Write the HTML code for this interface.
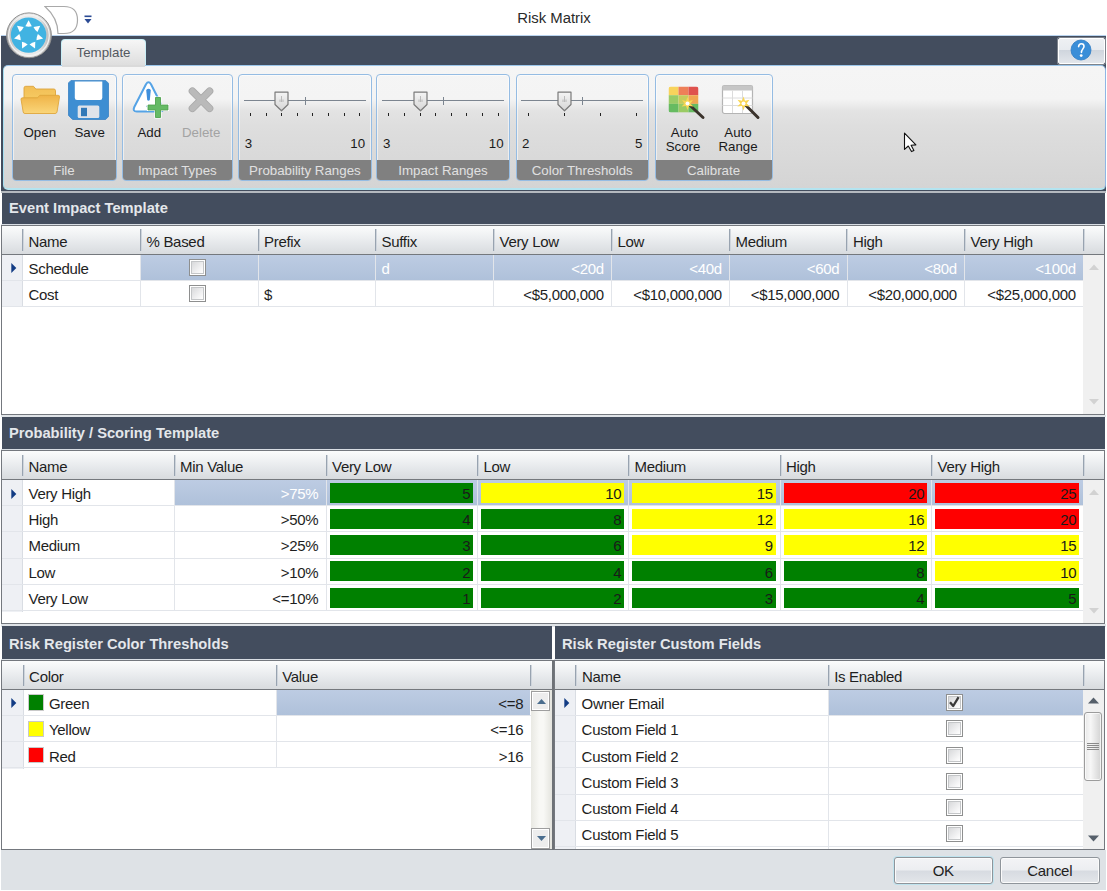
<!DOCTYPE html><html><head><meta charset="utf-8"><style>
html,body{margin:0;padding:0;}
body{width:1107px;height:891px;position:relative;overflow:hidden;background:#fff;font-family:"Liberation Sans", sans-serif;}
div{box-sizing:border-box;}
</style></head><body>
<div style="position:absolute;left:404px;width:300px;top:11.09px;font-size:14.9px;line-height:1;color:#2a2a2a;font-weight:400;white-space:nowrap;text-align:center">Risk Matrix</div>
<div style="position:absolute;left:1px;top:35px;width:1105px;height:1px;background:#b9d3ee"></div>
<div style="position:absolute;left:1px;top:36px;width:1105px;height:155px;background:#434d5e"></div>
<div style="position:absolute;left:61px;top:39px;width:85px;height:28px;background:linear-gradient(#f6f6f6,#dcdcdc);border:1px solid #c9eef6;border-bottom:none;border-radius:4px 4px 0 0"></div>
<div style="position:absolute;left:-46.5px;width:300px;top:46.25px;font-size:13.3px;line-height:1;color:#53585f;font-weight:400;white-space:nowrap;text-align:center">Template</div>
<div style="position:absolute;left:1056.5px;top:37px;width:49px;height:28px;border:1px solid #7d838c;border-radius:2px"></div>
<div style="position:absolute;left:1057.5px;top:38px;width:47px;height:26px;background:linear-gradient(#eef0f3 0%,#e8ebef 45%,#cfd5dd 46%,#e2e6eb 100%);border:1px solid #ffffff;border-radius:2px"></div>
<svg style="position:absolute;left:1070px;top:39px" width="22" height="22" viewBox="0 0 22 22"><circle cx="11" cy="11" r="10" fill="#3a8ed8" stroke="#2f7cc4" stroke-width="0.8"/><path d="M8.6 7.6 C8.8 5.6 10 4.7 11.4 4.7 C13 4.7 14 5.8 14 7.3 C14 9.6 11.6 10.2 11.4 13.4" stroke="#fff" stroke-width="1.6" fill="none" stroke-linecap="round"/><circle cx="11.2" cy="16.6" r="1.4" fill="#fff"/></svg>
<div style="position:absolute;left:3px;top:65px;width:1103px;height:125px;background:linear-gradient(#f5f5f5 0px,#f4f4f4 33px,#e3e3e3 45px,#dedede 60px,#d4d4d4 124px);border:1px solid;border-bottom-width:2px;border-color:#9cc6ea #8fb6e4 #b4e4f0 #a6def0;border-radius:5px"></div>
<div style="position:absolute;left:62px;top:64.5px;width:83px;height:2.5px;background:#dadada"></div>
<div style="position:absolute;left:11.5px;top:74px;width:105px;height:107px;border:1px solid #95bce3;border-radius:4px;box-shadow:inset 0 0 0 1px rgba(255,255,255,0.55)"></div>
<div style="position:absolute;left:12.5px;top:160px;width:103px;height:20px;background:#808080;border-radius:0 0 3px 3px"></div>
<div style="position:absolute;left:-86.0px;width:300px;top:163.75px;font-size:13.3px;line-height:1;color:#e0e0e0;font-weight:400;white-space:nowrap;text-align:center">File</div>
<div style="position:absolute;left:121.8px;top:74px;width:111px;height:107px;border:1px solid #95bce3;border-radius:4px;box-shadow:inset 0 0 0 1px rgba(255,255,255,0.55)"></div>
<div style="position:absolute;left:122.8px;top:160px;width:109px;height:20px;background:#808080;border-radius:0 0 3px 3px"></div>
<div style="position:absolute;left:27.30000000000001px;width:300px;top:163.75px;font-size:13.3px;line-height:1;color:#e0e0e0;font-weight:400;white-space:nowrap;text-align:center">Impact Types</div>
<div style="position:absolute;left:238.2px;top:74px;width:133.4px;height:107px;border:1px solid #95bce3;border-radius:4px;box-shadow:inset 0 0 0 1px rgba(255,255,255,0.55)"></div>
<div style="position:absolute;left:239.2px;top:160px;width:131.4px;height:20px;background:#808080;border-radius:0 0 3px 3px"></div>
<div style="position:absolute;left:154.89999999999998px;width:300px;top:163.75px;font-size:13.3px;line-height:1;color:#e0e0e0;font-weight:400;white-space:nowrap;text-align:center">Probability Ranges</div>
<div style="position:absolute;left:376px;top:74px;width:134px;height:107px;border:1px solid #95bce3;border-radius:4px;box-shadow:inset 0 0 0 1px rgba(255,255,255,0.55)"></div>
<div style="position:absolute;left:377px;top:160px;width:132px;height:20px;background:#808080;border-radius:0 0 3px 3px"></div>
<div style="position:absolute;left:293.0px;width:300px;top:163.75px;font-size:13.3px;line-height:1;color:#e0e0e0;font-weight:400;white-space:nowrap;text-align:center">Impact Ranges</div>
<div style="position:absolute;left:515.6px;top:74px;width:133.3px;height:107px;border:1px solid #95bce3;border-radius:4px;box-shadow:inset 0 0 0 1px rgba(255,255,255,0.55)"></div>
<div style="position:absolute;left:516.6px;top:160px;width:131.3px;height:20px;background:#808080;border-radius:0 0 3px 3px"></div>
<div style="position:absolute;left:432.25px;width:300px;top:163.75px;font-size:13.3px;line-height:1;color:#e0e0e0;font-weight:400;white-space:nowrap;text-align:center">Color Thresholds</div>
<div style="position:absolute;left:654.5px;top:74px;width:118px;height:107px;border:1px solid #95bce3;border-radius:4px;box-shadow:inset 0 0 0 1px rgba(255,255,255,0.55)"></div>
<div style="position:absolute;left:655.5px;top:160px;width:116px;height:20px;background:#808080;border-radius:0 0 3px 3px"></div>
<div style="position:absolute;left:563.5px;width:300px;top:163.75px;font-size:13.3px;line-height:1;color:#e0e0e0;font-weight:400;white-space:nowrap;text-align:center">Calibrate</div>
<svg style="position:absolute;left:20px;top:85px" width="41" height="31" viewBox="0 0 41 31">
<defs><linearGradient id="fg" x1="0" y1="0" x2="0" y2="1"><stop offset="0" stop-color="#efb347"/><stop offset="1" stop-color="#fad67a"/></linearGradient>
<linearGradient id="fb" x1="0" y1="0" x2="0" y2="1"><stop offset="0" stop-color="#f2be55"/><stop offset="1" stop-color="#f6ca62"/></linearGradient></defs>
<path d="M4 3 Q4 1.3 5.7 1.3 L13.5 1.3 L15.8 4 L33.8 4 Q35.5 4 35.5 5.7 L35.5 14 L4 14 Z" fill="url(#fb)" stroke="#dca43c" stroke-width="0.9"/>
<path d="M1 14.2 Q1 12.8 2.6 12.8 L17.6 12.8 L19.8 10.3 L38.2 10.3 Q39.8 10.3 39.5 12 L37 27 Q36.6 28.5 35 28.5 L5 28.5 Q3.4 28.5 3.2 27 Z" fill="url(#fg)" stroke="#dfa63c" stroke-width="0.9"/>
</svg>
<svg style="position:absolute;left:68px;top:80px" width="41" height="41" viewBox="0 0 41 41">
<path d="M3 0.4 L37.6 0.4 L40.5 3.3 L40.5 36.6 L37.6 39.5 L4.6 39.5 L0.5 35.4 L0.5 2.9 Z" fill="#3e8ed2" stroke="#3a82c4" stroke-width="0.8"/>
<path d="M6.8 1.4 L34.3 1.4 L34.3 17.8 Q34.3 20 32.1 20 L9 20 Q6.8 20 6.8 17.8 Z" fill="#ffffff"/>
<rect x="9.7" y="25.4" width="21.6" height="12.6" rx="1.5" fill="#dfe3ea"/>
<rect x="13" y="27.8" width="6" height="8.4" fill="#3179b8"/>
</svg>
<div style="position:absolute;left:23.5px;top:125.95px;font-size:13.3px;line-height:1;color:#1a1a1a;font-weight:400;white-space:nowrap;">Open</div>
<div style="position:absolute;left:74.5px;top:125.95px;font-size:13.3px;line-height:1;color:#1a1a1a;font-weight:400;white-space:nowrap;">Save</div>
<svg style="position:absolute;left:128px;top:78px" width="44" height="44" viewBox="0 0 44 44">
<path d="M18 6.2 Q20.5 2.5 23 6.2 L34.5 29 Q36.5 33.5 32 33.5 L8.8 33.5 Q4.3 33.5 6.3 29 Z" fill="#ffffff" stroke="#55a3e6" stroke-width="2" stroke-linejoin="round"/>
<path d="M18.2 12 Q20.5 9.5 22.8 12 L21.8 22 Q20.5 23.6 19.2 22 Z" fill="#3f8fdc"/>
<circle cx="20.3" cy="28.3" r="1.7" fill="#3f8fdc"/>
<path d="M27.5 19.5 L32.5 19.5 L32.5 27 L40 27 L40 32 L32.5 32 L32.5 39.5 L27.5 39.5 L27.5 32 L20 32 L20 27 L27.5 27 Z" fill="#65ba65" stroke="#ffffff" stroke-width="2.2" stroke-linejoin="miter" paint-order="stroke"/>
<path d="M27.5 19.5 L32.5 19.5 L32.5 27 L40 27 L40 32 L32.5 32 L32.5 39.5 L27.5 39.5 L27.5 32 L20 32 L20 27 L27.5 27 Z" fill="#65ba65" stroke="#4e9f4e" stroke-width="0.8"/>
</svg>
<svg style="position:absolute;left:186px;top:85px" width="30" height="30" viewBox="0 0 30 30">
<path d="M6.4 6.2 L23.6 23.4 M23.6 6.2 L6.4 23.4" stroke="#a9a9a9" stroke-width="7.4" stroke-linecap="round"/><path d="M6.4 6.2 L23.6 23.4 M23.6 6.2 L6.4 23.4" stroke="#bababa" stroke-width="5.8" stroke-linecap="round"/>
</svg>
<div style="position:absolute;left:137.5px;top:125.75px;font-size:13.3px;line-height:1;color:#1a1a1a;font-weight:400;white-space:nowrap;">Add</div>
<div style="position:absolute;left:182px;top:125.75px;font-size:13.3px;line-height:1;color:#a3a3a3;font-weight:400;white-space:nowrap;">Delete</div>
<div style="position:absolute;left:243.7px;top:100px;width:121.90000000000003px;height:1.2px;background:#7c8590"></div>
<div style="position:absolute;left:249.5px;top:113px;width:1.5px;height:3px;background:#222"></div>
<div style="position:absolute;left:265.5px;top:113px;width:1.5px;height:3px;background:#222"></div>
<div style="position:absolute;left:280.5px;top:113px;width:1.5px;height:3px;background:#222"></div>
<div style="position:absolute;left:296.5px;top:113px;width:1.5px;height:3px;background:#222"></div>
<div style="position:absolute;left:311.5px;top:113px;width:1.5px;height:3px;background:#222"></div>
<div style="position:absolute;left:327.5px;top:113px;width:1.5px;height:3px;background:#222"></div>
<div style="position:absolute;left:343.5px;top:113px;width:1.5px;height:3px;background:#222"></div>
<div style="position:absolute;left:358.5px;top:113px;width:1.5px;height:3px;background:#222"></div>
<div style="position:absolute;left:304.59999999999997px;top:96.5px;width:1.3px;height:8.5px;background:#7c8590"></div>
<svg style="position:absolute;left:274.3142857142857px;top:90.5px" width="15" height="21" viewBox="0 0 15 21">
<defs><linearGradient id="tg238" x1="0" y1="0" x2="0" y2="1"><stop offset="0" stop-color="#f4f4f4"/><stop offset="1" stop-color="#d6d6d6"/></linearGradient></defs>
<path d="M1 1.2 L14 1.2 L14 13.5 L7.5 19.8 L1 13.5 Z" fill="url(#tg238)" stroke="#7a7a7a" stroke-width="1.2" stroke-linejoin="round"/>
<path d="M7.5 5 L7.5 11 M6 8.5 L6 11 M9 8.5 L9 11" stroke="#a8a8a8" stroke-width="0.7"/>
</svg>
<div style="position:absolute;left:244.7px;top:137.25px;font-size:13.3px;line-height:1;color:#1a1a1a;font-weight:400;white-space:nowrap;">3</div>
<div style="position:absolute;right:741.9px;top:137.25px;font-size:13.3px;line-height:1;color:#1a1a1a;font-weight:400;white-space:nowrap;text-align:right">10</div>
<div style="position:absolute;left:382.0px;top:100px;width:122.10000000000002px;height:1.2px;background:#7c8590"></div>
<div style="position:absolute;left:387.5px;top:113px;width:1.5px;height:3px;background:#222"></div>
<div style="position:absolute;left:403.5px;top:113px;width:1.5px;height:3px;background:#222"></div>
<div style="position:absolute;left:419.5px;top:113px;width:1.5px;height:3px;background:#222"></div>
<div style="position:absolute;left:434.5px;top:113px;width:1.5px;height:3px;background:#222"></div>
<div style="position:absolute;left:450.5px;top:113px;width:1.5px;height:3px;background:#222"></div>
<div style="position:absolute;left:465.5px;top:113px;width:1.5px;height:3px;background:#222"></div>
<div style="position:absolute;left:481.5px;top:113px;width:1.5px;height:3px;background:#222"></div>
<div style="position:absolute;left:497.5px;top:113px;width:1.5px;height:3px;background:#222"></div>
<div style="position:absolute;left:442.9px;top:96.5px;width:1.3px;height:8.5px;background:#7c8590"></div>
<svg style="position:absolute;left:412.6714285714286px;top:90.5px" width="15" height="21" viewBox="0 0 15 21">
<defs><linearGradient id="tg376" x1="0" y1="0" x2="0" y2="1"><stop offset="0" stop-color="#f4f4f4"/><stop offset="1" stop-color="#d6d6d6"/></linearGradient></defs>
<path d="M1 1.2 L14 1.2 L14 13.5 L7.5 19.8 L1 13.5 Z" fill="url(#tg376)" stroke="#7a7a7a" stroke-width="1.2" stroke-linejoin="round"/>
<path d="M7.5 5 L7.5 11 M6 8.5 L6 11 M9 8.5 L9 11" stroke="#a8a8a8" stroke-width="0.7"/>
</svg>
<div style="position:absolute;left:383.0px;top:137.25px;font-size:13.3px;line-height:1;color:#1a1a1a;font-weight:400;white-space:nowrap;">3</div>
<div style="position:absolute;right:603.4px;top:137.25px;font-size:13.3px;line-height:1;color:#1a1a1a;font-weight:400;white-space:nowrap;text-align:right">10</div>
<div style="position:absolute;left:521.1px;top:100px;width:121.80000000000007px;height:1.2px;background:#7c8590"></div>
<div style="position:absolute;left:527.5px;top:113px;width:1.5px;height:3px;background:#222"></div>
<div style="position:absolute;left:563.5px;top:113px;width:1.5px;height:3px;background:#222"></div>
<div style="position:absolute;left:599.5px;top:113px;width:1.5px;height:3px;background:#222"></div>
<div style="position:absolute;left:635.5px;top:113px;width:1.5px;height:3px;background:#222"></div>
<div style="position:absolute;left:582.0px;top:96.5px;width:1.3px;height:8.5px;background:#7c8590"></div>
<svg style="position:absolute;left:556.8666666666667px;top:90.5px" width="15" height="21" viewBox="0 0 15 21">
<defs><linearGradient id="tg515" x1="0" y1="0" x2="0" y2="1"><stop offset="0" stop-color="#f4f4f4"/><stop offset="1" stop-color="#d6d6d6"/></linearGradient></defs>
<path d="M1 1.2 L14 1.2 L14 13.5 L7.5 19.8 L1 13.5 Z" fill="url(#tg515)" stroke="#7a7a7a" stroke-width="1.2" stroke-linejoin="round"/>
<path d="M7.5 5 L7.5 11 M6 8.5 L6 11 M9 8.5 L9 11" stroke="#a8a8a8" stroke-width="0.7"/>
</svg>
<div style="position:absolute;left:522.1px;top:137.25px;font-size:13.3px;line-height:1;color:#1a1a1a;font-weight:400;white-space:nowrap;">2</div>
<div style="position:absolute;right:464.5999999999999px;top:137.25px;font-size:13.3px;line-height:1;color:#1a1a1a;font-weight:400;white-space:nowrap;text-align:right">5</div>
<svg style="position:absolute;left:667px;top:85px" width="40" height="36" viewBox="0 0 40 36">
<clipPath id="cr"><rect x="1.5" y="1.5" width="30" height="26" rx="2.5"/></clipPath>
<g clip-path="url(#cr)">
<rect x="1.5" y="1.5" width="10" height="8.7" fill="#f8d35c"/><rect x="11.5" y="1.5" width="10" height="8.7" fill="#ee7f58"/><rect x="21.5" y="1.5" width="10" height="8.7" fill="#df524e"/>
<rect x="1.5" y="10.2" width="10" height="8.7" fill="#9acb67"/><rect x="11.5" y="10.2" width="10" height="8.7" fill="#c5cc5c"/><rect x="21.5" y="10.2" width="10" height="8.7" fill="#f0a651"/>
<rect x="1.5" y="18.9" width="10" height="8.7" fill="#66bb61"/><rect x="11.5" y="18.9" width="10" height="8.7" fill="#9acb64"/><rect x="21.5" y="18.9" width="10" height="8.7" fill="#66bb61"/>
</g>
<path d="M21 18.5 L36 32.5" stroke="#3b332c" stroke-width="3" stroke-linecap="round"/>
<path d="M20.5 12 L22 16 L26 15 L23.5 18.5 L26.5 21.5 L22 21 L20.5 25 L19 21 L14.5 21.5 L17.5 18.5 L15 15 L19 16 Z" fill="#f9d653"/>
<circle cx="20.5" cy="18.5" r="2" fill="#fff"/>
</svg>
<svg style="position:absolute;left:721px;top:84px" width="40" height="36" viewBox="0 0 40 36">
<rect x="1.5" y="1.5" width="30" height="28" rx="2" fill="#ffffff" stroke="#b4b4b4" stroke-width="1.2"/>
<rect x="1.5" y="1.5" width="30" height="5" fill="#c6c6c6"/>
<path d="M11.5 6.5 L11.5 29 M21.5 6.5 L21.5 29 M1.5 14 L31.5 14 M1.5 21.5 L31.5 21.5" stroke="#dcdcdc" stroke-width="1"/>
<path d="M23 19.5 L37 33.5" stroke="#3b332c" stroke-width="3" stroke-linecap="round"/>
<path d="M22.5 12.5 L24 16.8 L28.5 15.8 L25.6 19.5 L28.8 22.5 L24 22 L22.5 26.5 L21 22 L16.3 22.5 L19.4 19.5 L16.5 15.8 L21 16.8 Z" fill="#f9d653"/>
<circle cx="22.5" cy="19.5" r="2" fill="#fff"/>
</svg>
<div style="position:absolute;left:534.5px;width:300px;top:126.25px;font-size:13.3px;line-height:1;color:#1a1a1a;font-weight:400;white-space:nowrap;text-align:center">Auto</div>
<div style="position:absolute;left:533px;width:300px;top:140.35px;font-size:13.3px;line-height:1;color:#1a1a1a;font-weight:400;white-space:nowrap;text-align:center">Score</div>
<div style="position:absolute;left:588px;width:300px;top:126.25px;font-size:13.3px;line-height:1;color:#1a1a1a;font-weight:400;white-space:nowrap;text-align:center">Auto</div>
<div style="position:absolute;left:588px;width:300px;top:140.35px;font-size:13.3px;line-height:1;color:#1a1a1a;font-weight:400;white-space:nowrap;text-align:center">Range</div>
<svg style="position:absolute;left:903px;top:132px" width="15" height="22" viewBox="0 0 15 22">
<path d="M1.5 1.2 L1.5 17.4 L5.3 14 L8.5 19.6 L10.9 18.4 L8.1 13.2 L12.9 12.9 Z" fill="#fff" stroke="#111" stroke-width="1.1" stroke-linejoin="round"/>
</svg>
<div style="position:absolute;left:1px;top:191px;width:1105px;height:2px;background:#b4b9bf"></div>
<div style="position:absolute;left:1px;top:223.5px;width:1104px;height:2px;background:#d9dee4"></div>
<div style="position:absolute;left:2px;top:193px;width:1103px;height:30.5px;background:#434d5e"></div>
<div style="position:absolute;left:9px;top:200.76px;font-size:14.7px;line-height:1;color:#e4e7eb;font-weight:700;white-space:nowrap;">Event Impact Template</div>
<div style="position:absolute;left:1px;top:224.5px;width:1104px;height:190.5px;border:1px solid #74787e;background:#fff"></div>
<div style="position:absolute;left:2px;top:225.5px;width:1102px;height:28.5px;background:linear-gradient(#fbfcfc,#edeff1 40%,#e2e5e8 70%,#d8dbde)"></div>
<div style="position:absolute;left:2px;top:254px;width:1102px;height:1px;background:#74787d"></div>
<div style="position:absolute;left:22px;top:229px;width:1px;height:22px;background:#98a3b0"></div>
<div style="position:absolute;left:23px;top:229px;width:1px;height:22px;background:#cfd5dc"></div>
<div style="position:absolute;left:140px;top:229px;width:1px;height:22px;background:#98a3b0"></div>
<div style="position:absolute;left:141px;top:229px;width:1px;height:22px;background:#cfd5dc"></div>
<div style="position:absolute;left:258px;top:229px;width:1px;height:22px;background:#98a3b0"></div>
<div style="position:absolute;left:259px;top:229px;width:1px;height:22px;background:#cfd5dc"></div>
<div style="position:absolute;left:375px;top:229px;width:1px;height:22px;background:#98a3b0"></div>
<div style="position:absolute;left:376px;top:229px;width:1px;height:22px;background:#cfd5dc"></div>
<div style="position:absolute;left:493px;top:229px;width:1px;height:22px;background:#98a3b0"></div>
<div style="position:absolute;left:494px;top:229px;width:1px;height:22px;background:#cfd5dc"></div>
<div style="position:absolute;left:611px;top:229px;width:1px;height:22px;background:#98a3b0"></div>
<div style="position:absolute;left:612px;top:229px;width:1px;height:22px;background:#cfd5dc"></div>
<div style="position:absolute;left:729px;top:229px;width:1px;height:22px;background:#98a3b0"></div>
<div style="position:absolute;left:730px;top:229px;width:1px;height:22px;background:#cfd5dc"></div>
<div style="position:absolute;left:846px;top:229px;width:1px;height:22px;background:#98a3b0"></div>
<div style="position:absolute;left:847px;top:229px;width:1px;height:22px;background:#cfd5dc"></div>
<div style="position:absolute;left:964px;top:229px;width:1px;height:22px;background:#98a3b0"></div>
<div style="position:absolute;left:965px;top:229px;width:1px;height:22px;background:#cfd5dc"></div>
<div style="position:absolute;left:1083px;top:229px;width:1px;height:22px;background:#98a3b0"></div>
<div style="position:absolute;left:1084px;top:229px;width:1px;height:22px;background:#cfd5dc"></div>
<div style="position:absolute;left:28.5px;top:233.71px;letter-spacing:-0.3px;font-size:15px;line-height:1;color:#1e1e1e;font-weight:400;white-space:nowrap;letter-spacing:-0.3px;">Name</div>
<div style="position:absolute;left:146.5px;top:233.71px;letter-spacing:-0.3px;font-size:15px;line-height:1;color:#1e1e1e;font-weight:400;white-space:nowrap;letter-spacing:-0.3px;">% Based</div>
<div style="position:absolute;left:264.0px;top:233.71px;letter-spacing:-0.3px;font-size:15px;line-height:1;color:#1e1e1e;font-weight:400;white-space:nowrap;letter-spacing:-0.3px;">Prefix</div>
<div style="position:absolute;left:381.5px;top:233.71px;letter-spacing:-0.3px;font-size:15px;line-height:1;color:#1e1e1e;font-weight:400;white-space:nowrap;letter-spacing:-0.3px;">Suffix</div>
<div style="position:absolute;left:499.5px;top:233.71px;letter-spacing:-0.3px;font-size:15px;line-height:1;color:#1e1e1e;font-weight:400;white-space:nowrap;letter-spacing:-0.3px;">Very Low</div>
<div style="position:absolute;left:617.5px;top:233.71px;letter-spacing:-0.3px;font-size:15px;line-height:1;color:#1e1e1e;font-weight:400;white-space:nowrap;letter-spacing:-0.3px;">Low</div>
<div style="position:absolute;left:735.5px;top:233.71px;letter-spacing:-0.3px;font-size:15px;line-height:1;color:#1e1e1e;font-weight:400;white-space:nowrap;letter-spacing:-0.3px;">Medium</div>
<div style="position:absolute;left:853.0px;top:233.71px;letter-spacing:-0.3px;font-size:15px;line-height:1;color:#1e1e1e;font-weight:400;white-space:nowrap;letter-spacing:-0.3px;">High</div>
<div style="position:absolute;left:970.5px;top:233.71px;letter-spacing:-0.3px;font-size:15px;line-height:1;color:#1e1e1e;font-weight:400;white-space:nowrap;letter-spacing:-0.3px;">Very High</div>
<div style="position:absolute;left:2px;top:255px;width:20px;height:52px;background:#eef0f4"></div>
<div style="position:absolute;left:22px;top:255px;width:1px;height:52px;background:#d9dde3"></div>
<div style="position:absolute;left:141px;top:255px;width:942px;height:25px;background:linear-gradient(#bdcce3,#afc1da)"></div>
<div style="position:absolute;left:2px;top:280px;width:1081px;height:1px;background:#e2e5ea"></div>
<div style="position:absolute;left:2px;top:306px;width:1081px;height:1px;background:#e2e5ea"></div>
<div style="position:absolute;left:140px;top:255px;width:1px;height:51px;background:#e2e5ea"></div>
<div style="position:absolute;left:257.5px;top:255px;width:1px;height:51px;background:#e2e5ea"></div>
<div style="position:absolute;left:375px;top:255px;width:1px;height:51px;background:#e2e5ea"></div>
<div style="position:absolute;left:493px;top:255px;width:1px;height:51px;background:#e2e5ea"></div>
<div style="position:absolute;left:611px;top:255px;width:1px;height:51px;background:#e2e5ea"></div>
<div style="position:absolute;left:729px;top:255px;width:1px;height:51px;background:#e2e5ea"></div>
<div style="position:absolute;left:846.5px;top:255px;width:1px;height:51px;background:#e2e5ea"></div>
<div style="position:absolute;left:964px;top:255px;width:1px;height:51px;background:#e2e5ea"></div>
<svg style="position:absolute;left:11px;top:262.6px" width="6" height="10" viewBox="0 0 6 10"><path d="M0.3 0 L5.3 5 L0.3 10 Z" fill="#133c84"/></svg>
<div style="position:absolute;left:28.5px;top:261.01px;letter-spacing:-0.3px;font-size:15px;line-height:1;color:#1e1e1e;font-weight:400;white-space:nowrap;letter-spacing:-0.3px;">Schedule</div>
<div style="position:absolute;left:28.5px;top:287.01px;letter-spacing:-0.3px;font-size:15px;line-height:1;color:#1e1e1e;font-weight:400;white-space:nowrap;letter-spacing:-0.3px;">Cost</div>
<div style="position:absolute;left:189.0px;top:258.8px;width:17px;height:17px;border:1px solid #8e8f8f;background:#fff;padding:1px"><div style="width:100%;height:100%;border:1px solid #c4c6c8;background:linear-gradient(135deg,#d8d9db,#f4f4f5 70%,#ffffff)"></div></div>
<div style="position:absolute;left:189.0px;top:285.0px;width:17px;height:17px;border:1px solid #8e8f8f;background:#fff;padding:1px"><div style="width:100%;height:100%;border:1px solid #c4c6c8;background:linear-gradient(135deg,#d8d9db,#f4f4f5 70%,#ffffff)"></div></div>
<div style="position:absolute;left:381.5px;top:261.01px;letter-spacing:-0.3px;font-size:15px;line-height:1;color:#ffffff;font-weight:400;white-space:nowrap;letter-spacing:-0.3px;">d</div>
<div style="position:absolute;left:264.0px;top:287.01px;letter-spacing:-0.3px;font-size:15px;line-height:1;color:#1e1e1e;font-weight:400;white-space:nowrap;letter-spacing:-0.3px;">$</div>
<div style="position:absolute;letter-spacing:-0.3px;margin-right:-0.3px;right:503.5px;top:261.01px;font-size:15px;line-height:1;color:#ffffff;font-weight:400;white-space:nowrap;text-align:right">&lt;20d</div>
<div style="position:absolute;letter-spacing:-0.3px;margin-right:-0.3px;right:503.5px;top:287.01px;font-size:15px;line-height:1;color:#1e1e1e;font-weight:400;white-space:nowrap;text-align:right">&lt;$5,000,000</div>
<div style="position:absolute;letter-spacing:-0.3px;margin-right:-0.3px;right:385.5px;top:261.01px;font-size:15px;line-height:1;color:#ffffff;font-weight:400;white-space:nowrap;text-align:right">&lt;40d</div>
<div style="position:absolute;letter-spacing:-0.3px;margin-right:-0.3px;right:385.5px;top:287.01px;font-size:15px;line-height:1;color:#1e1e1e;font-weight:400;white-space:nowrap;text-align:right">&lt;$10,000,000</div>
<div style="position:absolute;letter-spacing:-0.3px;margin-right:-0.3px;right:268.0px;top:261.01px;font-size:15px;line-height:1;color:#ffffff;font-weight:400;white-space:nowrap;text-align:right">&lt;60d</div>
<div style="position:absolute;letter-spacing:-0.3px;margin-right:-0.3px;right:268.0px;top:287.01px;font-size:15px;line-height:1;color:#1e1e1e;font-weight:400;white-space:nowrap;text-align:right">&lt;$15,000,000</div>
<div style="position:absolute;letter-spacing:-0.3px;margin-right:-0.3px;right:150.5px;top:261.01px;font-size:15px;line-height:1;color:#ffffff;font-weight:400;white-space:nowrap;text-align:right">&lt;80d</div>
<div style="position:absolute;letter-spacing:-0.3px;margin-right:-0.3px;right:150.5px;top:287.01px;font-size:15px;line-height:1;color:#1e1e1e;font-weight:400;white-space:nowrap;text-align:right">&lt;$20,000,000</div>
<div style="position:absolute;letter-spacing:-0.3px;margin-right:-0.3px;right:31.5px;top:261.01px;font-size:15px;line-height:1;color:#ffffff;font-weight:400;white-space:nowrap;text-align:right">&lt;100d</div>
<div style="position:absolute;letter-spacing:-0.3px;margin-right:-0.3px;right:31.5px;top:287.01px;font-size:15px;line-height:1;color:#1e1e1e;font-weight:400;white-space:nowrap;text-align:right">&lt;$25,000,000</div>
<div style="position:absolute;left:1083px;top:255px;width:21px;height:159px;background:#f0f0f0"></div>
<svg style="position:absolute;left:1088.5px;top:264px" width="10" height="6" viewBox="0 0 10 6"><path d="M0 6 L5 0.5 L10 6 Z" fill="#d2d2d2"/></svg>
<svg style="position:absolute;left:1088.5px;top:399px" width="10" height="6" viewBox="0 0 10 6"><path d="M0 0 L5 5.5 L10 0 Z" fill="#d2d2d2"/></svg>
<div style="position:absolute;left:1px;top:415px;width:1105px;height:2px;background:#dfe3e7"></div>
<div style="position:absolute;left:1px;top:448.5px;width:1104px;height:2px;background:#d9dee4"></div>
<div style="position:absolute;left:2px;top:417px;width:1103px;height:31.5px;background:#434d5e"></div>
<div style="position:absolute;left:9px;top:426.36px;font-size:14.7px;line-height:1;color:#e4e7eb;font-weight:700;white-space:nowrap;">Probability / Scoring Template</div>
<div style="position:absolute;left:1px;top:450px;width:1104px;height:174px;border:1px solid #74787e;background:#fff"></div>
<div style="position:absolute;left:2px;top:451px;width:1102px;height:28px;background:linear-gradient(#fbfcfc,#edeff1 40%,#e2e5e8 70%,#d8dbde)"></div>
<div style="position:absolute;left:2px;top:479px;width:1102px;height:1px;background:#74787d"></div>
<div style="position:absolute;left:22px;top:455px;width:1px;height:21px;background:#98a3b0"></div>
<div style="position:absolute;left:23px;top:455px;width:1px;height:21px;background:#cfd5dc"></div>
<div style="position:absolute;left:174px;top:455px;width:1px;height:21px;background:#98a3b0"></div>
<div style="position:absolute;left:175px;top:455px;width:1px;height:21px;background:#cfd5dc"></div>
<div style="position:absolute;left:326px;top:455px;width:1px;height:21px;background:#98a3b0"></div>
<div style="position:absolute;left:327px;top:455px;width:1px;height:21px;background:#cfd5dc"></div>
<div style="position:absolute;left:477px;top:455px;width:1px;height:21px;background:#98a3b0"></div>
<div style="position:absolute;left:478px;top:455px;width:1px;height:21px;background:#cfd5dc"></div>
<div style="position:absolute;left:628px;top:455px;width:1px;height:21px;background:#98a3b0"></div>
<div style="position:absolute;left:629px;top:455px;width:1px;height:21px;background:#cfd5dc"></div>
<div style="position:absolute;left:780px;top:455px;width:1px;height:21px;background:#98a3b0"></div>
<div style="position:absolute;left:781px;top:455px;width:1px;height:21px;background:#cfd5dc"></div>
<div style="position:absolute;left:931px;top:455px;width:1px;height:21px;background:#98a3b0"></div>
<div style="position:absolute;left:932px;top:455px;width:1px;height:21px;background:#cfd5dc"></div>
<div style="position:absolute;left:1083px;top:455px;width:1px;height:21px;background:#98a3b0"></div>
<div style="position:absolute;left:1084px;top:455px;width:1px;height:21px;background:#cfd5dc"></div>
<div style="position:absolute;left:28.5px;top:458.61px;letter-spacing:-0.3px;font-size:15px;line-height:1;color:#1e1e1e;font-weight:400;white-space:nowrap;letter-spacing:-0.3px;">Name</div>
<div style="position:absolute;left:180.1px;top:458.61px;letter-spacing:-0.3px;font-size:15px;line-height:1;color:#1e1e1e;font-weight:400;white-space:nowrap;letter-spacing:-0.3px;">Min Value</div>
<div style="position:absolute;left:332.0px;top:458.61px;letter-spacing:-0.3px;font-size:15px;line-height:1;color:#1e1e1e;font-weight:400;white-space:nowrap;letter-spacing:-0.3px;">Very Low</div>
<div style="position:absolute;left:483.5px;top:458.61px;letter-spacing:-0.3px;font-size:15px;line-height:1;color:#1e1e1e;font-weight:400;white-space:nowrap;letter-spacing:-0.3px;">Low</div>
<div style="position:absolute;left:634.5px;top:458.61px;letter-spacing:-0.3px;font-size:15px;line-height:1;color:#1e1e1e;font-weight:400;white-space:nowrap;letter-spacing:-0.3px;">Medium</div>
<div style="position:absolute;left:786.0px;top:458.61px;letter-spacing:-0.3px;font-size:15px;line-height:1;color:#1e1e1e;font-weight:400;white-space:nowrap;letter-spacing:-0.3px;">High</div>
<div style="position:absolute;left:937.5px;top:458.61px;letter-spacing:-0.3px;font-size:15px;line-height:1;color:#1e1e1e;font-weight:400;white-space:nowrap;letter-spacing:-0.3px;">Very High</div>
<div style="position:absolute;left:2px;top:480px;width:20px;height:131.60000000000002px;background:#eef0f4"></div>
<div style="position:absolute;left:22px;top:480px;width:1px;height:131.60000000000002px;background:#d9dde3"></div>
<div style="position:absolute;left:174.6px;top:480px;width:908.4px;height:25px;background:linear-gradient(#bdcce3,#afc1da)"></div>
<div style="position:absolute;left:2px;top:505px;width:1081px;height:1px;background:#e2e5ea"></div>
<div style="position:absolute;left:2px;top:531px;width:1081px;height:1px;background:#e2e5ea"></div>
<div style="position:absolute;left:2px;top:558px;width:1081px;height:1px;background:#e2e5ea"></div>
<div style="position:absolute;left:2px;top:584px;width:1081px;height:1px;background:#e2e5ea"></div>
<div style="position:absolute;left:2px;top:610px;width:1081px;height:1px;background:#e2e5ea"></div>
<div style="position:absolute;left:173.6px;top:480px;width:1px;height:131px;background:#e2e5ea"></div>
<div style="position:absolute;left:325.5px;top:480px;width:1px;height:131px;background:#e2e5ea"></div>
<div style="position:absolute;left:477px;top:480px;width:1px;height:131px;background:#e2e5ea"></div>
<div style="position:absolute;left:628px;top:480px;width:1px;height:131px;background:#e2e5ea"></div>
<div style="position:absolute;left:779.5px;top:480px;width:1px;height:131px;background:#e2e5ea"></div>
<div style="position:absolute;left:931px;top:480px;width:1px;height:131px;background:#e2e5ea"></div>
<svg style="position:absolute;left:11px;top:488.5px" width="6" height="10" viewBox="0 0 6 10"><path d="M0.3 0 L5.3 5 L0.3 10 Z" fill="#133c84"/></svg>
<div style="position:absolute;left:28.5px;top:485.91px;letter-spacing:-0.3px;font-size:15px;line-height:1;color:#1e1e1e;font-weight:400;white-space:nowrap;letter-spacing:-0.3px;">Very High</div>
<div style="position:absolute;letter-spacing:-0.3px;margin-right:-0.3px;right:789.0px;top:485.91px;font-size:15px;line-height:1;color:#ffffff;font-weight:400;white-space:nowrap;text-align:right">&gt;75%</div>
<div style="position:absolute;left:329.5px;top:482.5px;width:143.5px;height:20.2px;background:#008000"></div>
<div style="position:absolute;letter-spacing:-0.3px;margin-right:-0.3px;right:637px;top:485.91px;font-size:15px;line-height:1;color:#1a1a1a;font-weight:400;white-space:nowrap;text-align:right">5</div>
<div style="position:absolute;left:481px;top:482.5px;width:143px;height:20.2px;background:#ffff00"></div>
<div style="position:absolute;letter-spacing:-0.3px;margin-right:-0.3px;right:486px;top:485.91px;font-size:15px;line-height:1;color:#1a1a1a;font-weight:400;white-space:nowrap;text-align:right">10</div>
<div style="position:absolute;left:632px;top:482.5px;width:143.5px;height:20.2px;background:#ffff00"></div>
<div style="position:absolute;letter-spacing:-0.3px;margin-right:-0.3px;right:334.5px;top:485.91px;font-size:15px;line-height:1;color:#1a1a1a;font-weight:400;white-space:nowrap;text-align:right">15</div>
<div style="position:absolute;left:783.5px;top:482.5px;width:143.5px;height:20.2px;background:#ff0000"></div>
<div style="position:absolute;letter-spacing:-0.3px;margin-right:-0.3px;right:183px;top:485.91px;font-size:15px;line-height:1;color:#1a1a1a;font-weight:400;white-space:nowrap;text-align:right">20</div>
<div style="position:absolute;left:935px;top:482.5px;width:144px;height:20.2px;background:#ff0000"></div>
<div style="position:absolute;letter-spacing:-0.3px;margin-right:-0.3px;right:31px;top:485.91px;font-size:15px;line-height:1;color:#1a1a1a;font-weight:400;white-space:nowrap;text-align:right">25</div>
<div style="position:absolute;left:28.5px;top:512.16px;letter-spacing:-0.3px;font-size:15px;line-height:1;color:#1e1e1e;font-weight:400;white-space:nowrap;letter-spacing:-0.3px;">High</div>
<div style="position:absolute;letter-spacing:-0.3px;margin-right:-0.3px;right:789.0px;top:512.16px;font-size:15px;line-height:1;color:#1e1e1e;font-weight:400;white-space:nowrap;text-align:right">&gt;50%</div>
<div style="position:absolute;left:329.5px;top:508.75px;width:143.5px;height:20.2px;background:#008000"></div>
<div style="position:absolute;letter-spacing:-0.3px;margin-right:-0.3px;right:637px;top:512.16px;font-size:15px;line-height:1;color:#1a1a1a;font-weight:400;white-space:nowrap;text-align:right">4</div>
<div style="position:absolute;left:481px;top:508.75px;width:143px;height:20.2px;background:#008000"></div>
<div style="position:absolute;letter-spacing:-0.3px;margin-right:-0.3px;right:486px;top:512.16px;font-size:15px;line-height:1;color:#1a1a1a;font-weight:400;white-space:nowrap;text-align:right">8</div>
<div style="position:absolute;left:632px;top:508.75px;width:143.5px;height:20.2px;background:#ffff00"></div>
<div style="position:absolute;letter-spacing:-0.3px;margin-right:-0.3px;right:334.5px;top:512.16px;font-size:15px;line-height:1;color:#1a1a1a;font-weight:400;white-space:nowrap;text-align:right">12</div>
<div style="position:absolute;left:783.5px;top:508.75px;width:143.5px;height:20.2px;background:#ffff00"></div>
<div style="position:absolute;letter-spacing:-0.3px;margin-right:-0.3px;right:183px;top:512.16px;font-size:15px;line-height:1;color:#1a1a1a;font-weight:400;white-space:nowrap;text-align:right">16</div>
<div style="position:absolute;left:935px;top:508.75px;width:144px;height:20.2px;background:#ff0000"></div>
<div style="position:absolute;letter-spacing:-0.3px;margin-right:-0.3px;right:31px;top:512.16px;font-size:15px;line-height:1;color:#1a1a1a;font-weight:400;white-space:nowrap;text-align:right">20</div>
<div style="position:absolute;left:28.5px;top:538.41px;letter-spacing:-0.3px;font-size:15px;line-height:1;color:#1e1e1e;font-weight:400;white-space:nowrap;letter-spacing:-0.3px;">Medium</div>
<div style="position:absolute;letter-spacing:-0.3px;margin-right:-0.3px;right:789.0px;top:538.41px;font-size:15px;line-height:1;color:#1e1e1e;font-weight:400;white-space:nowrap;text-align:right">&gt;25%</div>
<div style="position:absolute;left:329.5px;top:535.0px;width:143.5px;height:20.2px;background:#008000"></div>
<div style="position:absolute;letter-spacing:-0.3px;margin-right:-0.3px;right:637px;top:538.41px;font-size:15px;line-height:1;color:#1a1a1a;font-weight:400;white-space:nowrap;text-align:right">3</div>
<div style="position:absolute;left:481px;top:535.0px;width:143px;height:20.2px;background:#008000"></div>
<div style="position:absolute;letter-spacing:-0.3px;margin-right:-0.3px;right:486px;top:538.41px;font-size:15px;line-height:1;color:#1a1a1a;font-weight:400;white-space:nowrap;text-align:right">6</div>
<div style="position:absolute;left:632px;top:535.0px;width:143.5px;height:20.2px;background:#ffff00"></div>
<div style="position:absolute;letter-spacing:-0.3px;margin-right:-0.3px;right:334.5px;top:538.41px;font-size:15px;line-height:1;color:#1a1a1a;font-weight:400;white-space:nowrap;text-align:right">9</div>
<div style="position:absolute;left:783.5px;top:535.0px;width:143.5px;height:20.2px;background:#ffff00"></div>
<div style="position:absolute;letter-spacing:-0.3px;margin-right:-0.3px;right:183px;top:538.41px;font-size:15px;line-height:1;color:#1a1a1a;font-weight:400;white-space:nowrap;text-align:right">12</div>
<div style="position:absolute;left:935px;top:535.0px;width:144px;height:20.2px;background:#ffff00"></div>
<div style="position:absolute;letter-spacing:-0.3px;margin-right:-0.3px;right:31px;top:538.41px;font-size:15px;line-height:1;color:#1a1a1a;font-weight:400;white-space:nowrap;text-align:right">15</div>
<div style="position:absolute;left:28.5px;top:564.66px;letter-spacing:-0.3px;font-size:15px;line-height:1;color:#1e1e1e;font-weight:400;white-space:nowrap;letter-spacing:-0.3px;">Low</div>
<div style="position:absolute;letter-spacing:-0.3px;margin-right:-0.3px;right:789.0px;top:564.66px;font-size:15px;line-height:1;color:#1e1e1e;font-weight:400;white-space:nowrap;text-align:right">&gt;10%</div>
<div style="position:absolute;left:329.5px;top:561.25px;width:143.5px;height:20.2px;background:#008000"></div>
<div style="position:absolute;letter-spacing:-0.3px;margin-right:-0.3px;right:637px;top:564.66px;font-size:15px;line-height:1;color:#1a1a1a;font-weight:400;white-space:nowrap;text-align:right">2</div>
<div style="position:absolute;left:481px;top:561.25px;width:143px;height:20.2px;background:#008000"></div>
<div style="position:absolute;letter-spacing:-0.3px;margin-right:-0.3px;right:486px;top:564.66px;font-size:15px;line-height:1;color:#1a1a1a;font-weight:400;white-space:nowrap;text-align:right">4</div>
<div style="position:absolute;left:632px;top:561.25px;width:143.5px;height:20.2px;background:#008000"></div>
<div style="position:absolute;letter-spacing:-0.3px;margin-right:-0.3px;right:334.5px;top:564.66px;font-size:15px;line-height:1;color:#1a1a1a;font-weight:400;white-space:nowrap;text-align:right">6</div>
<div style="position:absolute;left:783.5px;top:561.25px;width:143.5px;height:20.2px;background:#008000"></div>
<div style="position:absolute;letter-spacing:-0.3px;margin-right:-0.3px;right:183px;top:564.66px;font-size:15px;line-height:1;color:#1a1a1a;font-weight:400;white-space:nowrap;text-align:right">8</div>
<div style="position:absolute;left:935px;top:561.25px;width:144px;height:20.2px;background:#ffff00"></div>
<div style="position:absolute;letter-spacing:-0.3px;margin-right:-0.3px;right:31px;top:564.66px;font-size:15px;line-height:1;color:#1a1a1a;font-weight:400;white-space:nowrap;text-align:right">10</div>
<div style="position:absolute;left:28.5px;top:590.91px;letter-spacing:-0.3px;font-size:15px;line-height:1;color:#1e1e1e;font-weight:400;white-space:nowrap;letter-spacing:-0.3px;">Very Low</div>
<div style="position:absolute;letter-spacing:-0.3px;margin-right:-0.3px;right:789.0px;top:590.91px;font-size:15px;line-height:1;color:#1e1e1e;font-weight:400;white-space:nowrap;text-align:right">&lt;=10%</div>
<div style="position:absolute;left:329.5px;top:587.5px;width:143.5px;height:20.2px;background:#008000"></div>
<div style="position:absolute;letter-spacing:-0.3px;margin-right:-0.3px;right:637px;top:590.91px;font-size:15px;line-height:1;color:#1a1a1a;font-weight:400;white-space:nowrap;text-align:right">1</div>
<div style="position:absolute;left:481px;top:587.5px;width:143px;height:20.2px;background:#008000"></div>
<div style="position:absolute;letter-spacing:-0.3px;margin-right:-0.3px;right:486px;top:590.91px;font-size:15px;line-height:1;color:#1a1a1a;font-weight:400;white-space:nowrap;text-align:right">2</div>
<div style="position:absolute;left:632px;top:587.5px;width:143.5px;height:20.2px;background:#008000"></div>
<div style="position:absolute;letter-spacing:-0.3px;margin-right:-0.3px;right:334.5px;top:590.91px;font-size:15px;line-height:1;color:#1a1a1a;font-weight:400;white-space:nowrap;text-align:right">3</div>
<div style="position:absolute;left:783.5px;top:587.5px;width:143.5px;height:20.2px;background:#008000"></div>
<div style="position:absolute;letter-spacing:-0.3px;margin-right:-0.3px;right:183px;top:590.91px;font-size:15px;line-height:1;color:#1a1a1a;font-weight:400;white-space:nowrap;text-align:right">4</div>
<div style="position:absolute;left:935px;top:587.5px;width:144px;height:20.2px;background:#008000"></div>
<div style="position:absolute;letter-spacing:-0.3px;margin-right:-0.3px;right:31px;top:590.91px;font-size:15px;line-height:1;color:#1a1a1a;font-weight:400;white-space:nowrap;text-align:right">5</div>
<div style="position:absolute;left:1083px;top:480px;width:21px;height:143px;background:#f0f0f0"></div>
<svg style="position:absolute;left:1088.5px;top:489px" width="10" height="6" viewBox="0 0 10 6"><path d="M0 6 L5 0.5 L10 6 Z" fill="#d2d2d2"/></svg>
<svg style="position:absolute;left:1088.5px;top:608px" width="10" height="6" viewBox="0 0 10 6"><path d="M0 0 L5 5.5 L10 0 Z" fill="#d2d2d2"/></svg>
<div style="position:absolute;left:1px;top:624px;width:1105px;height:2.5px;background:#dfe3e7"></div>
<div style="position:absolute;left:1px;top:658.5px;width:551px;height:2px;background:#d9dee4"></div>
<div style="position:absolute;left:2px;top:626px;width:550px;height:32.5px;background:#434d5e"></div>
<div style="position:absolute;left:9px;top:636.76px;font-size:14.7px;line-height:1;color:#e4e7eb;font-weight:700;white-space:nowrap;">Risk Register Color Thresholds</div>
<div style="position:absolute;left:554px;top:658.5px;width:551px;height:2px;background:#d9dee4"></div>
<div style="position:absolute;left:555px;top:626px;width:550px;height:32.5px;background:#434d5e"></div>
<div style="position:absolute;left:562px;top:636.76px;font-size:14.7px;line-height:1;color:#e4e7eb;font-weight:700;white-space:nowrap;">Risk Register Custom Fields</div>
<div style="position:absolute;left:1px;top:660px;width:553px;height:190px;border:1px solid #74787e;background:#fff"></div>
<div style="position:absolute;left:2px;top:661px;width:551px;height:28px;background:linear-gradient(#fbfcfc,#edeff1 40%,#e2e5e8 70%,#d8dbde)"></div>
<div style="position:absolute;left:2px;top:689px;width:551px;height:1px;background:#74787d"></div>
<div style="position:absolute;left:23px;top:665px;width:1px;height:21px;background:#98a3b0"></div>
<div style="position:absolute;left:24px;top:665px;width:1px;height:21px;background:#cfd5dc"></div>
<div style="position:absolute;left:276px;top:665px;width:1px;height:21px;background:#98a3b0"></div>
<div style="position:absolute;left:277px;top:665px;width:1px;height:21px;background:#cfd5dc"></div>
<div style="position:absolute;left:530px;top:665px;width:1px;height:21px;background:#98a3b0"></div>
<div style="position:absolute;left:531px;top:665px;width:1px;height:21px;background:#cfd5dc"></div>
<div style="position:absolute;left:29.1px;top:668.91px;letter-spacing:-0.3px;font-size:15px;line-height:1;color:#1e1e1e;font-weight:400;white-space:nowrap;letter-spacing:-0.3px;">Color</div>
<div style="position:absolute;left:282.2px;top:668.91px;letter-spacing:-0.3px;font-size:15px;line-height:1;color:#1e1e1e;font-weight:400;white-space:nowrap;letter-spacing:-0.3px;">Value</div>
<div style="position:absolute;left:2px;top:690px;width:20.6px;height:78.79999999999995px;background:#eef0f4"></div>
<div style="position:absolute;left:22.6px;top:690px;width:1px;height:78.79999999999995px;background:#d9dde3"></div>
<div style="position:absolute;left:276.7px;top:690px;width:253.8px;height:25px;background:linear-gradient(#bdcce3,#afc1da)"></div>
<div style="position:absolute;left:2px;top:715px;width:529px;height:1px;background:#e2e5ea"></div>
<div style="position:absolute;left:2px;top:741px;width:529px;height:1px;background:#e2e5ea"></div>
<div style="position:absolute;left:2px;top:767px;width:529px;height:1px;background:#e2e5ea"></div>
<div style="position:absolute;left:275.7px;top:690px;width:1px;height:78px;background:#e2e5ea"></div>
<svg style="position:absolute;left:11px;top:698px" width="6" height="10" viewBox="0 0 6 10"><path d="M0.3 0 L5.3 5 L0.3 10 Z" fill="#133c84"/></svg>
<div style="position:absolute;left:27.6px;top:694.4px;width:16.6px;height:16.2px;background:#008000;border:1px solid #c9c9c9"></div>
<div style="position:absolute;left:49px;top:696.01px;letter-spacing:-0.3px;font-size:15px;line-height:1;color:#1e1e1e;font-weight:400;white-space:nowrap;letter-spacing:-0.3px;">Green</div>
<div style="position:absolute;letter-spacing:-0.3px;margin-right:-0.3px;right:584.0px;top:696.01px;font-size:15px;line-height:1;color:#1e1e1e;font-weight:400;white-space:nowrap;text-align:right">&lt;=8</div>
<div style="position:absolute;left:27.6px;top:720.65px;width:16.6px;height:16.2px;background:#ffff00;border:1px solid #c9c9c9"></div>
<div style="position:absolute;left:49px;top:722.26px;letter-spacing:-0.3px;font-size:15px;line-height:1;color:#1e1e1e;font-weight:400;white-space:nowrap;letter-spacing:-0.3px;">Yellow</div>
<div style="position:absolute;letter-spacing:-0.3px;margin-right:-0.3px;right:584.0px;top:722.26px;font-size:15px;line-height:1;color:#1e1e1e;font-weight:400;white-space:nowrap;text-align:right">&lt;=16</div>
<div style="position:absolute;left:27.6px;top:746.9px;width:16.6px;height:16.2px;background:#ff0000;border:1px solid #c9c9c9"></div>
<div style="position:absolute;left:49px;top:748.51px;letter-spacing:-0.3px;font-size:15px;line-height:1;color:#1e1e1e;font-weight:400;white-space:nowrap;letter-spacing:-0.3px;">Red</div>
<div style="position:absolute;letter-spacing:-0.3px;margin-right:-0.3px;right:584.0px;top:748.51px;font-size:15px;line-height:1;color:#1e1e1e;font-weight:400;white-space:nowrap;text-align:right">&gt;16</div>
<div style="position:absolute;left:530.5px;top:690px;width:21px;height:159px;background:linear-gradient(90deg,#e9e9e3,#f8f8f5 40%,#f8f8f5 60%,#e4e4de)"></div>
<div style="position:absolute;left:531px;top:690.5px;width:19px;height:20px;background:#ededed;border:1px solid #9e9e9e;box-shadow:inset 0 0 0 1px #ffffff"></div>
<svg style="position:absolute;left:536.5px;top:699px" width="9" height="5" viewBox="0 0 9 5"><path d="M0 5 L4.5 0 L9 5 Z" fill="#4a6d8e"/></svg>
<div style="position:absolute;left:531px;top:828px;width:19px;height:20.5px;background:#ededed;border:1px solid #9e9e9e;box-shadow:inset 0 0 0 1px #ffffff"></div>
<svg style="position:absolute;left:536.5px;top:836px" width="9" height="5" viewBox="0 0 9 5"><path d="M0 0 L4.5 5 L9 0 Z" fill="#4a6d8e"/></svg>
<div style="position:absolute;left:552px;top:660px;width:2px;height:190px;background:#6e7277"></div>
<div style="position:absolute;left:554px;top:660px;width:551px;height:190px;border:1px solid #74787e;background:#fff"></div>
<div style="position:absolute;left:555px;top:661px;width:549px;height:28px;background:linear-gradient(#fbfcfc,#edeff1 40%,#e2e5e8 70%,#d8dbde)"></div>
<div style="position:absolute;left:555px;top:689px;width:549px;height:1px;background:#74787d"></div>
<div style="position:absolute;left:575px;top:665px;width:1px;height:21px;background:#98a3b0"></div>
<div style="position:absolute;left:576px;top:665px;width:1px;height:21px;background:#cfd5dc"></div>
<div style="position:absolute;left:828px;top:665px;width:1px;height:21px;background:#98a3b0"></div>
<div style="position:absolute;left:829px;top:665px;width:1px;height:21px;background:#cfd5dc"></div>
<div style="position:absolute;left:1083px;top:665px;width:1px;height:21px;background:#98a3b0"></div>
<div style="position:absolute;left:1084px;top:665px;width:1px;height:21px;background:#cfd5dc"></div>
<div style="position:absolute;left:581.9px;top:668.91px;letter-spacing:-0.3px;font-size:15px;line-height:1;color:#1e1e1e;font-weight:400;white-space:nowrap;letter-spacing:-0.3px;">Name</div>
<div style="position:absolute;left:834.2px;top:668.91px;letter-spacing:-0.3px;font-size:15px;line-height:1;color:#1e1e1e;font-weight:400;white-space:nowrap;letter-spacing:-0.3px;">Is Enabled</div>
<div style="position:absolute;left:555px;top:690px;width:20.399999999999977px;height:159px;background:#eef0f4"></div>
<div style="position:absolute;left:575.4px;top:690px;width:1px;height:159px;background:#d9dde3"></div>
<div style="position:absolute;left:828.7px;top:690px;width:254.29999999999995px;height:25px;background:linear-gradient(#bdcce3,#afc1da)"></div>
<div style="position:absolute;left:555px;top:715px;width:528px;height:1px;background:#e2e5ea"></div>
<div style="position:absolute;left:555px;top:741px;width:528px;height:1px;background:#e2e5ea"></div>
<div style="position:absolute;left:555px;top:767px;width:528px;height:1px;background:#e2e5ea"></div>
<div style="position:absolute;left:555px;top:794px;width:528px;height:1px;background:#e2e5ea"></div>
<div style="position:absolute;left:555px;top:820px;width:528px;height:1px;background:#e2e5ea"></div>
<div style="position:absolute;left:555px;top:846px;width:528px;height:1px;background:#e2e5ea"></div>
<div style="position:absolute;left:827.7px;top:690px;width:1px;height:159px;background:#e2e5ea"></div>
<svg style="position:absolute;left:564px;top:698px" width="6" height="10" viewBox="0 0 6 10"><path d="M0.3 0 L5.3 5 L0.3 10 Z" fill="#133c84"/></svg>
<div style="position:absolute;left:581.6px;top:696.01px;letter-spacing:-0.3px;font-size:15px;line-height:1;color:#1e1e1e;font-weight:400;white-space:nowrap;letter-spacing:-0.3px;">Owner Email</div>
<div style="position:absolute;left:946.0px;top:694.1px;width:17px;height:17px;border:1px solid #8e8f8f;background:#fff;padding:1px"><div style="width:100%;height:100%;border:1px solid #c4c6c8;background:linear-gradient(135deg,#d8d9db,#f4f4f5 70%,#ffffff)"></div></div>
<svg style="position:absolute;left:946.0px;top:694.1px" width="17" height="17" viewBox="0 0 17 17"><path d="M4 8.3 L7.2 12 L12.6 3.2" stroke="#3a3a3a" stroke-width="2.3" fill="none" stroke-linejoin="round"/></svg>
<div style="position:absolute;left:581.6px;top:722.26px;letter-spacing:-0.3px;font-size:15px;line-height:1;color:#1e1e1e;font-weight:400;white-space:nowrap;letter-spacing:-0.3px;">Custom Field 1</div>
<div style="position:absolute;left:946.0px;top:720.35px;width:17px;height:17px;border:1px solid #8e8f8f;background:#fff;padding:1px"><div style="width:100%;height:100%;border:1px solid #c4c6c8;background:linear-gradient(135deg,#d8d9db,#f4f4f5 70%,#ffffff)"></div></div>
<div style="position:absolute;left:581.6px;top:748.51px;letter-spacing:-0.3px;font-size:15px;line-height:1;color:#1e1e1e;font-weight:400;white-space:nowrap;letter-spacing:-0.3px;">Custom Field 2</div>
<div style="position:absolute;left:946.0px;top:746.6px;width:17px;height:17px;border:1px solid #8e8f8f;background:#fff;padding:1px"><div style="width:100%;height:100%;border:1px solid #c4c6c8;background:linear-gradient(135deg,#d8d9db,#f4f4f5 70%,#ffffff)"></div></div>
<div style="position:absolute;left:581.6px;top:774.76px;letter-spacing:-0.3px;font-size:15px;line-height:1;color:#1e1e1e;font-weight:400;white-space:nowrap;letter-spacing:-0.3px;">Custom Field 3</div>
<div style="position:absolute;left:946.0px;top:772.85px;width:17px;height:17px;border:1px solid #8e8f8f;background:#fff;padding:1px"><div style="width:100%;height:100%;border:1px solid #c4c6c8;background:linear-gradient(135deg,#d8d9db,#f4f4f5 70%,#ffffff)"></div></div>
<div style="position:absolute;left:581.6px;top:801.01px;letter-spacing:-0.3px;font-size:15px;line-height:1;color:#1e1e1e;font-weight:400;white-space:nowrap;letter-spacing:-0.3px;">Custom Field 4</div>
<div style="position:absolute;left:946.0px;top:799.1px;width:17px;height:17px;border:1px solid #8e8f8f;background:#fff;padding:1px"><div style="width:100%;height:100%;border:1px solid #c4c6c8;background:linear-gradient(135deg,#d8d9db,#f4f4f5 70%,#ffffff)"></div></div>
<div style="position:absolute;left:581.6px;top:827.26px;letter-spacing:-0.3px;font-size:15px;line-height:1;color:#1e1e1e;font-weight:400;white-space:nowrap;letter-spacing:-0.3px;">Custom Field 5</div>
<div style="position:absolute;left:946.0px;top:825.35px;width:17px;height:17px;border:1px solid #8e8f8f;background:#fff;padding:1px"><div style="width:100%;height:100%;border:1px solid #c4c6c8;background:linear-gradient(135deg,#d8d9db,#f4f4f5 70%,#ffffff)"></div></div>
<div style="position:absolute;left:1083px;top:690px;width:21px;height:159px;background:#f0f0f0"></div>
<svg style="position:absolute;left:1088px;top:697px" width="11" height="7" viewBox="0 0 11 7"><path d="M0 6.5 L5.5 0.5 L11 6.5 Z" fill="#56606b"/></svg>
<svg style="position:absolute;left:1088px;top:834.5px" width="11" height="7" viewBox="0 0 11 7"><path d="M0 0.5 L5.5 6.5 L11 0.5 Z" fill="#56606b"/></svg>
<div style="position:absolute;left:1084px;top:711.5px;width:18px;height:69px;background:linear-gradient(90deg,#e8e8e8,#f7f7f7 35%,#e9e9e9 60%,#d3d3d3);border:1px solid #9c9c9c;border-radius:3px;box-shadow:inset 0 0 0 1px rgba(255,255,255,0.7)"></div>
<div style="position:absolute;left:1087px;top:743px;width:12px;height:1px;background:#8a8a8a"></div>
<div style="position:absolute;left:1087px;top:745px;width:12px;height:1px;background:#8a8a8a"></div>
<div style="position:absolute;left:1087px;top:747px;width:12px;height:1px;background:#8a8a8a"></div>
<div style="position:absolute;left:1087px;top:749px;width:12px;height:1px;background:#8a8a8a"></div>
<div style="position:absolute;left:1px;top:850px;width:1105px;height:40px;background:#dee2e6"></div>
<div style="position:absolute;left:893.8px;top:856.5px;width:99px;height:27px;background:linear-gradient(#f3f4f6 0%,#eceef1 48%,#d7dbe1 52%,#e3e6ea 100%);border:1px solid #8f959b;border-radius:3px;box-shadow:inset 0 0 0 1px #fbfbfb,0 0 0 1px #bfe3ee"></div>
<div style="position:absolute;letter-spacing:-0.3px;left:793.3px;width:300px;top:863.11px;font-size:15px;line-height:1;color:#1e1e1e;font-weight:400;white-space:nowrap;text-align:center">OK</div>
<div style="position:absolute;left:1000px;top:856.5px;width:99.5px;height:27px;background:linear-gradient(#f3f4f6 0%,#eceef1 48%,#d7dbe1 52%,#e3e6ea 100%);border:1px solid #8f959b;border-radius:3px;box-shadow:inset 0 0 0 1px #fbfbfb"></div>
<div style="position:absolute;letter-spacing:-0.3px;left:899.75px;width:300px;top:863.11px;font-size:15px;line-height:1;color:#1e1e1e;font-weight:400;white-space:nowrap;text-align:center">Cancel</div>
<svg style="position:absolute;left:44px;top:5px" width="36" height="30" viewBox="0 0 36 30">
<path d="M1 1.5 L20 1.5 Q33.5 1.5 33.5 15 Q33.5 28.5 20 28.5 L14 28.5 Q14 13 1 1.5 Z" fill="#fff" stroke="#a9a9a9" stroke-width="1.2"/>
</svg>
<svg style="position:absolute;left:84px;top:15px" width="8" height="9" viewBox="0 0 8 9"><rect x="0.5" y="0.5" width="7" height="1.6" fill="#2a4a94"/><path d="M0.5 4 L7.5 4 L4 8.5 Z" fill="#2a4a94"/></svg>
<svg style="position:absolute;left:6px;top:12px" width="46" height="47" viewBox="0 0 46 47">
<defs><linearGradient id="og" x1="0" y1="0" x2="1" y2="0"><stop offset="0" stop-color="#b3b3b3"/><stop offset="0.3" stop-color="#e9e9e9"/><stop offset="0.7" stop-color="#e9e9e9"/><stop offset="1" stop-color="#b3b3b3"/></linearGradient></defs>
<circle cx="23" cy="23.3" r="22.4" fill="url(#og)" stroke="#8f8f8f" stroke-width="1"/>
<circle cx="23" cy="23.3" r="20.3" fill="none" stroke="#f4f4f4" stroke-width="1.2"/>
<circle cx="22.6" cy="23.1" r="17.7" fill="#41b3e2"/>
<path d="M0 -3.3 L3.2 2.8 Q0 3.6 -3.2 2.8 Z" transform="translate(22.60,11.50) rotate(360.0)" fill="#fff"/><path d="M0 -3.3 L3.2 2.8 Q0 3.6 -3.2 2.8 Z" transform="translate(31.67,15.87) rotate(411.4)" fill="#fff"/><path d="M0 -3.3 L3.2 2.8 Q0 3.6 -3.2 2.8 Z" transform="translate(33.91,25.68) rotate(462.9)" fill="#fff"/><path d="M0 -3.3 L3.2 2.8 Q0 3.6 -3.2 2.8 Z" transform="translate(27.63,33.55) rotate(514.3)" fill="#fff"/><path d="M0 -3.3 L3.2 2.8 Q0 3.6 -3.2 2.8 Z" transform="translate(17.57,33.55) rotate(565.7)" fill="#fff"/><path d="M0 -3.3 L3.2 2.8 Q0 3.6 -3.2 2.8 Z" transform="translate(11.29,25.68) rotate(617.1)" fill="#fff"/><path d="M0 -3.3 L3.2 2.8 Q0 3.6 -3.2 2.8 Z" transform="translate(13.53,15.87) rotate(668.6)" fill="#fff"/>
</svg>
</body></html>
